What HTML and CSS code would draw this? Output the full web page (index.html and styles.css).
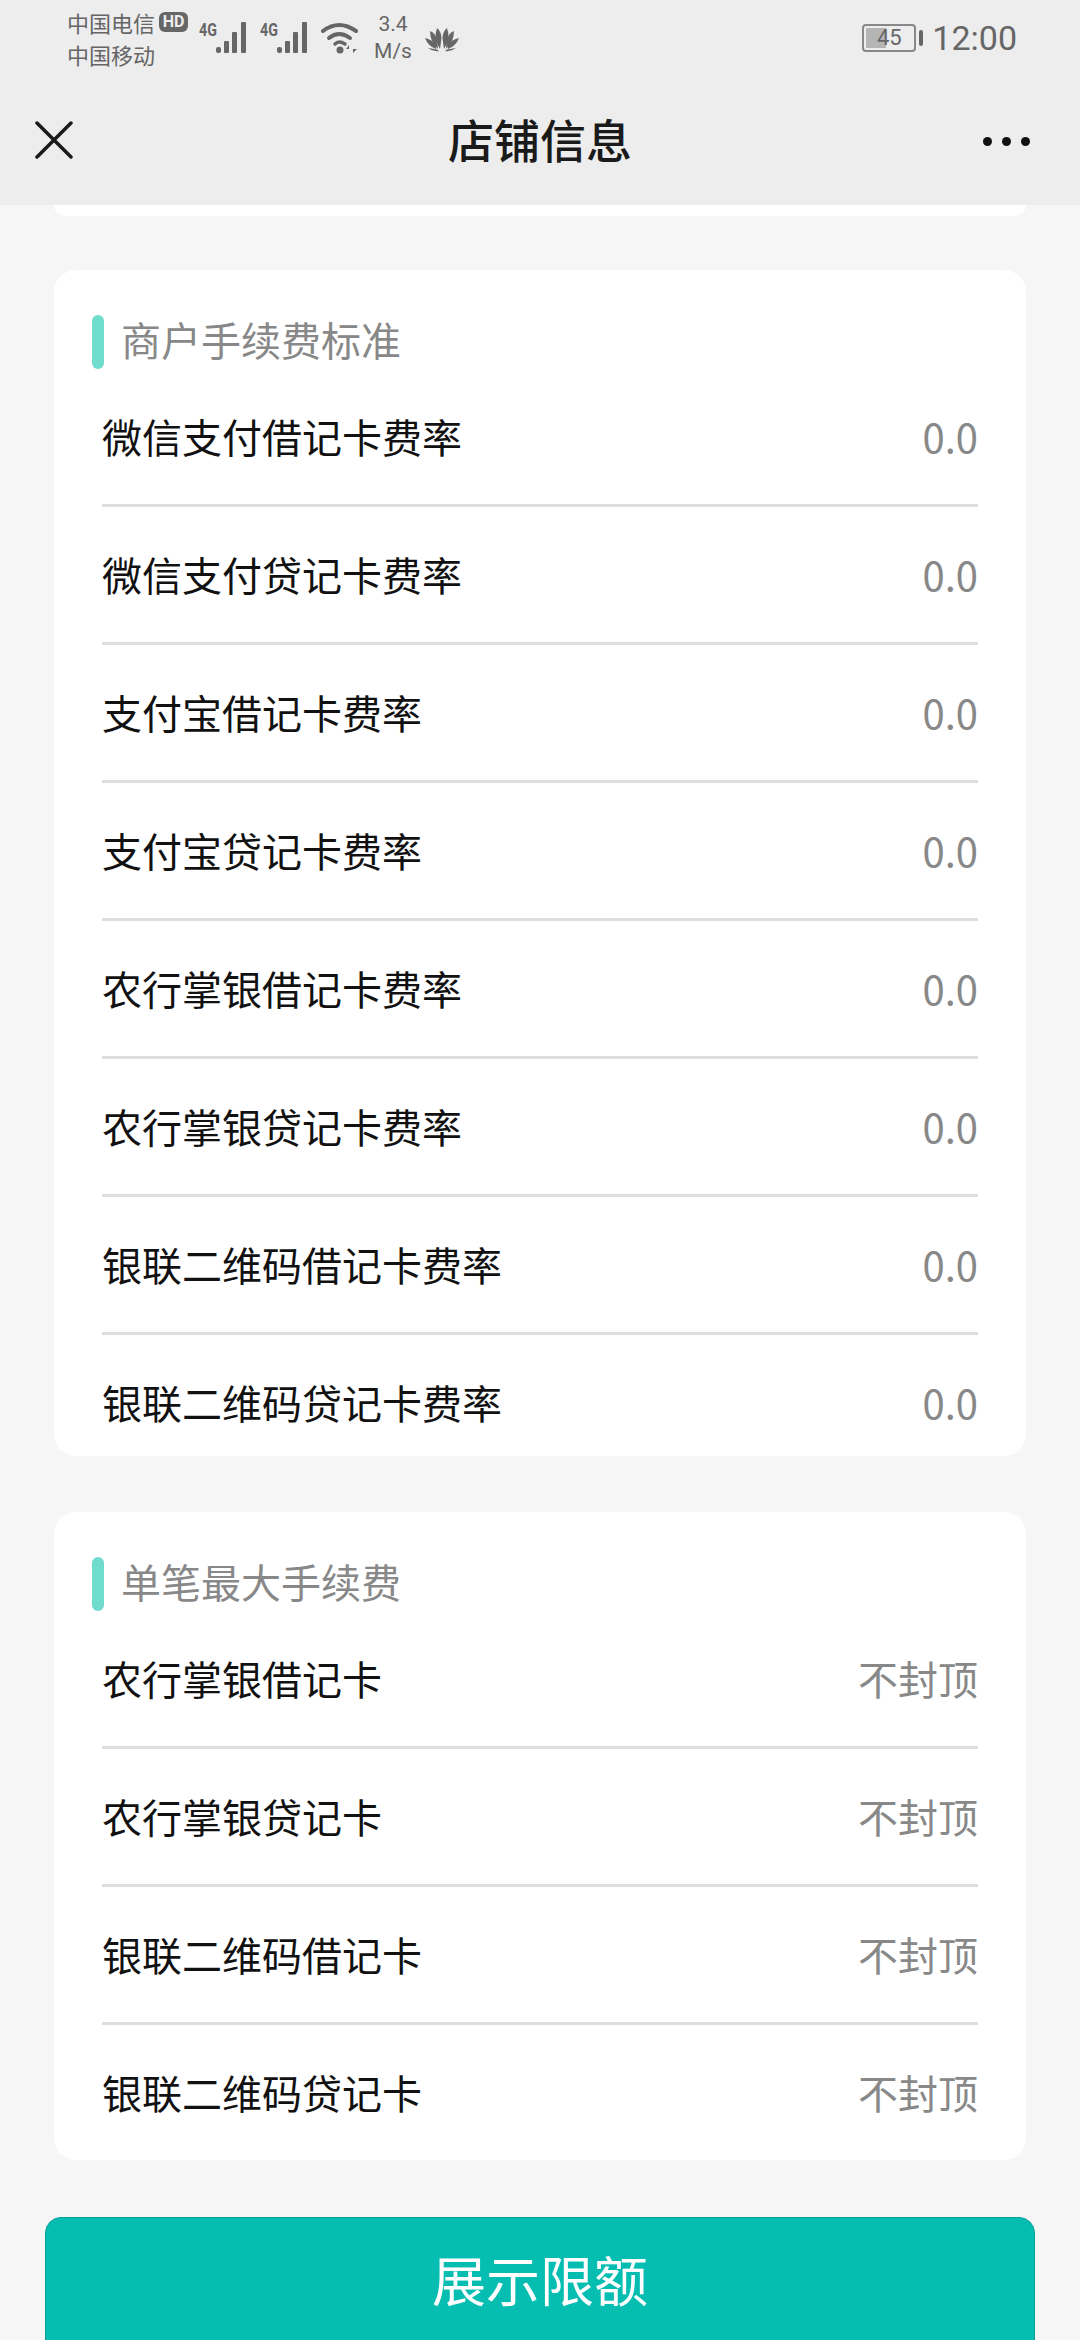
FILE: index.html
```html
<!DOCTYPE html>
<html lang="zh">
<head>
    <meta charset="UTF-8">
    <meta name="viewport" content="width=device-width, initial-scale=1.0">
    <title>店铺信息</title>
    <link rel="stylesheet" href="styles.css">
</head>
<body>
    <div class="page">
        <!-- 顶部 -->
        <header class="top">
            <div class="status">
                <div class="carriers">
                    <div class="carrier-line">中国电信<span class="hd">HD</span></div>
                    <div class="carrier-line">中国移动</div>
                </div>
                <div class="net">
                    <span class="net-label">4G</span>
                    <svg class="bars" viewBox="0 0 32 32"><rect x="0" y="25" width="5" height="6" rx="2"/><rect x="8" y="19" width="5" height="12" rx="1"/><rect x="16" y="10" width="5" height="21" rx="1"/><rect x="25" y="0" width="5" height="31" rx="1"/></svg>
                </div>
                <div class="net net-second">
                    <span class="net-label">4G</span>
                    <svg class="bars" viewBox="0 0 32 32"><rect x="0" y="25" width="5" height="6" rx="2"/><rect x="8" y="19" width="5" height="12" rx="1"/><rect x="16" y="10" width="5" height="21" rx="1"/><rect x="25" y="0" width="5" height="31" rx="1"/></svg>
                </div>
                <svg class="wifi" viewBox="0 0 40 32">
                    <path d="M2 9 Q18 -3 35 9" fill="none" stroke="#666" stroke-width="4" stroke-linecap="round"/>
                    <path d="M8 16 Q18 8 29 16" fill="none" stroke="#666" stroke-width="4" stroke-linecap="round"/>
                    <path d="M14 22 Q18 18 24 22" fill="none" stroke="#666" stroke-width="3.5" stroke-linecap="round"/>
                    <circle cx="19" cy="28" r="3.5" fill="#666"/>
                    <path d="M28 31V23L25 27H28ZM32 23V31L36 27H32Z" fill="#666"/>
                </svg>
                <div class="speed"><span>3.4</span><span>M/s</span></div>
                <svg class="logo" viewBox="0 0 34 26" fill="#666">
                    <path d="M15 23 Q8 12 12 2 Q16 5 16.500 12 Z"/>
                    <path d="M19 23 Q26 12 22 2 Q18 5 17.500 12 Z"/>
                    <path d="M13 23 Q5 16 5 5 Q10 7 12 13 Z"/>
                    <path d="M21 23 Q29 16 29 5 Q24 7 22 13 Z"/>
                    <path d="M11 23 Q3 20 0 12 Q7 13 11 20 Z"/>
                    <path d="M23 23 Q31 20 34 12 Q27 13 23 20 Z"/>
                    <path d="M14 25 Q8 26 3 22 L12 23.500 Z"/>
                    <path d="M20 25 Q26 26 31 22 L22 23.500 Z"/>
                </svg>
                <div class="status-right">
                    <div class="battery"><span class="battery-level"></span><span class="battery-num">45</span></div>
                    <span class="battery-tip"></span>
                    <span class="clock">12:00</span>
                </div>
            </div>
            <nav class="nav">
                <div class="nav-side">
                    <svg class="close" viewBox="0 0 38 38"><path d="M2 2L36 36M36 2L2 36" stroke="#1a1a1a" stroke-width="3.500" stroke-linecap="round"/></svg>
                </div>
                <h1 class="nav-title">店铺信息</h1>
                <div class="nav-side nav-side-right">
                    <div class="more"><span></span><span></span><span></span></div>
                </div>
            </nav>
        </header>

        <main class="content">
            <div class="card-end"></div>

            <!-- 手续费 -->
            <section class="card card-rates">
                <h2 class="card-title">商户手续费标准</h2>
                <div class="row"><span>微信支付借记卡费率</span><span class="val">0.0</span></div>
                <div class="row"><span>微信支付贷记卡费率</span><span class="val">0.0</span></div>
                <div class="row"><span>支付宝借记卡费率</span><span class="val">0.0</span></div>
                <div class="row"><span>支付宝贷记卡费率</span><span class="val">0.0</span></div>
                <div class="row"><span>农行掌银借记卡费率</span><span class="val">0.0</span></div>
                <div class="row"><span>农行掌银贷记卡费率</span><span class="val">0.0</span></div>
                <div class="row"><span>银联二维码借记卡费率</span><span class="val">0.0</span></div>
                <div class="row row-last"><span>银联二维码贷记卡费率</span><span class="val">0.0</span></div>
            </section>

            <!-- 单笔最大 -->
            <section class="card card-max">
                <h2 class="card-title">单笔最大手续费</h2>
                <div class="row"><span>农行掌银借记卡</span><span class="val">不封顶</span></div>
                <div class="row"><span>农行掌银贷记卡</span><span class="val">不封顶</span></div>
                <div class="row"><span>银联二维码借记卡</span><span class="val">不封顶</span></div>
                <div class="row row-last"><span>银联二维码贷记卡</span><span class="val">不封顶</span></div>
            </section>

            <button class="limit-btn">展示限额</button>
        </main>
    </div>
</body>
</html>
```

FILE: styles.css
```css
* {
    box-sizing: border-box;
}

body {
    margin: 0;
    font-family: "Noto Sans CJK SC", "Roboto", sans-serif;
    background-color: #f6f6f6;
}

.page {
    width: 1080px;
    height: 2340px;
    overflow: hidden;
}

/* top bar */
.top {
    height: 205px;
    background-color: #ededed;
}

.status {
    height: 70px;
    padding: 6px 0 0 67px;
    display: flex;
    color: #666;
}

.carriers {
    width: 132px;
}

.carrier-line {
    height: 32px;
    font-size: 22px;
    line-height: 30px;
    display: flex;
    align-items: center;
}

.hd {
    margin-left: 4px;
    width: 29px;
    height: 20px;
    background-color: #666;
    color: #ededed;
    border-radius: 6px;
    font-family: "Roboto", sans-serif;
    font-size: 16px;
    font-weight: 700;
    line-height: 20px;
    text-align: center;
}

.net {
    width: 61px;
    display: flex;
    padding-top: 16px;
}

.net-label {
    width: 17px;
    font-family: "Roboto", sans-serif;
    font-size: 19px;
    font-weight: 700;
    line-height: 16px;
    transform: scaleX(0.75);
    transform-origin: left;
}

.bars {
    width: 32px;
    height: 32px;
    fill: #666;
}

.wifi {
    margin: 16px 0 0 0;
    width: 40px;
    height: 32px;
}

.speed {
    width: 64px;
    display: flex;
    flex-direction: column;
    align-items: center;
    font-family: "Roboto", sans-serif;
    font-size: 21px;
    line-height: 27px;
    margin-top: 5px;
}

.logo {
    width: 34px;
    height: 26px;
    margin-top: 20px;
}

.status-right {
    margin-left: auto;
    padding: 18px 63px 0 0;
    display: flex;
    align-items: flex-start;
}

.battery {
    width: 54px;
    height: 28px;
    border: 2px solid #888;
    border-radius: 4px;
    position: relative;
    font-family: "Roboto", sans-serif;
    font-size: 22px;
    line-height: 24px;
    text-align: center;
}

.battery-level {
    position: absolute;
    left: 2px;
    top: 2px;
    width: 20px;
    height: 20px;
    background-color: #b5b5b5;
}

.battery-num {
    position: relative;
}

.battery-tip {
    width: 4px;
    height: 16px;
    margin: 6px 0 0 3px;
    background-color: #666;
    border-radius: 2px;
}

.clock {
    margin: -4px 0 0 9px;
    font-family: "Roboto", sans-serif;
    font-size: 34px;
    line-height: 36px;
}

.nav {
    height: 135px;
    padding: 4px 50px 0 34px;
    display: flex;
    align-items: center;
}

.nav-side {
    flex: 1;
    display: flex;
    align-items: center;
}

.nav-side-right {
    justify-content: flex-end;
}

.close {
    width: 40px;
    height: 38px;
}

/* the two sides differ by 16px, so pull the title back to the middle */
.nav-title {
    margin: 0 0 3px 16px;
    font-size: 46px;
    font-weight: 500;
    color: #1a1a1a;
}

.more {
    display: flex;
    gap: 10px;
    margin-top: 3px;
}

.more span {
    width: 9px;
    height: 9px;
    border-radius: 50%;
    background-color: #111;
}

/* cards */
.content {
    display: flex;
    flex-direction: column;
    align-items: center;
}

.card-end {
    width: 972px;
    height: 11px;
    background-color: #fff;
    border-radius: 0 0 22px 22px;
}

.card {
    width: 972px;
    margin-top: 54px;
    background-color: #fff;
    border-radius: 22px;
    padding: 0 48px;
}

.card-rates {
    height: 1186px;
}

.card-max {
    margin-top: 56px;
    height: 648px;
}

.card-title {
    margin: 0;
    height: 99px;
    padding: 42px 0 0 19px;
    font-size: 40px;
    font-weight: 400;
    line-height: 54px;
    color: #888;
    position: relative;
}

.card-title::before {
    content: "";
    position: absolute;
    left: -10px;
    top: 45px;
    width: 12px;
    height: 54px;
    border-radius: 6px;
    background-color: #6fdccd;
}

.row {
    height: 138px;
    padding-bottom: 2px;
    display: flex;
    justify-content: space-between;
    align-items: center;
    border-bottom: 3px solid #dedede;
    font-size: 40px;
    color: #111;
}

.row-last {
    border-bottom: none;
    padding-bottom: 4px;
}

.val {
    color: #888;
}

.limit-btn {
    flex-shrink: 0;
    width: 990px;
    height: 170px;
    margin-top: 57px;
    background-color: #05bdb0;
    border: 1px solid #0a9f95;
    border-radius: 16px;
    padding: 0 0 48px;
    color: #fff;
    font-family: inherit;
    font-size: 54px;
}
```
